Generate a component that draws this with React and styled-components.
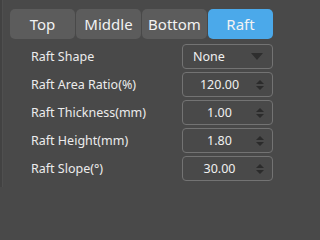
import React, { useState } from 'react'
import styled, { createGlobalStyle } from 'styled-components'

const GlobalStyle = createGlobalStyle`
  html, body {
    margin: 0;
    padding: 0;
    background: #494949;
    font-family: "Noto Sans", "Open Sans", sans-serif;
  }
`

const tabs = ['Top', 'Middle', 'Bottom', 'Raft']

const rows = [
  { label: 'Raft Shape', value: 'None', kind: 'select' },
  { label: 'Raft Area Ratio(%)', value: '120.00' },
  { label: 'Raft Thickness(mm)', value: '1.00' },
  { label: 'Raft Height(mm)', value: '1.80' },
  { label: 'Raft Slope(°)', value: '30.00' },
]

function App() {
  const [active, setActive] = useState('Raft')

  return (
    <>
      <GlobalStyle />
      <Page>
        <Strip />
        <Panel>
          <TabBar>
            {tabs.map((t) => (
              <Tab key={t} $active={t === active} onClick={() => setActive(t)}>
                {t}
              </Tab>
            ))}
          </TabBar>

          <Form>
            {rows.map((r) => (
              <Row key={r.label}>
                <Label>{r.label}</Label>
                <Field>
                  <Value $select={r.kind === 'select'}>{r.value}</Value>
                  {r.kind === 'select' ? (
                    <DropArrow />
                  ) : (
                    <Spinner>
                      <ArrowUp />
                      <ArrowDown />
                    </Spinner>
                  )}
                </Field>
              </Row>
            ))}
          </Form>
        </Panel>
      </Page>
    </>
  )
}

const Page = styled.div`
  width: 282px;
  height: 220px;
  display: flex;
  background: #494949;
  overflow: hidden;
`

const Strip = styled.div`
  width: 2px;
  height: 187px;
  background: #424242;
  border-right: 1px solid #4f4f4f;
`

const Panel = styled.div`
  flex: 1;
  padding: 9px 0 0 7px;
`

const TabBar = styled.div`
  display: flex;
  gap: 1px;
`

const Tab = styled.div`
  width: 65px;
  height: 30px;
  border-radius: 5px;
  background: ${(p) => (p.$active ? '#4ba9ea' : '#5c5c5c')};
  color: #f2f2f2;
  font-size: 15px;
  display: flex;
  align-items: center;
  justify-content: center;
  cursor: pointer;
`

const Form = styled.div`
  display: flex;
  flex-direction: column;
  gap: 3px;
  padding: 5px 0 0 21px;
`

const Row = styled.div`
  display: flex;
  align-items: center;
  justify-content: space-between;
  width: 242px;
  height: 25px;
`

const Label = styled.div`
  color: #ececec;
  font-size: 12.5px;
  white-space: nowrap;
`

const Field = styled.div`
  position: relative;
  width: 89px;
  height: 23px;
  border: 1px solid #737373;
  border-radius: 4px;
  display: flex;
  align-items: center;
`

const Value = styled.div`
  flex: 1;
  color: #f0f0f0;
  font-size: 12.5px;
  text-align: ${(p) => (p.$select ? 'left' : 'center')};
  padding-left: ${(p) => (p.$select ? '10px' : '0')};
`

const DropArrow = styled.div`
  width: 0;
  height: 0;
  margin-right: 9px;
  border-left: 6px solid transparent;
  border-right: 6px solid transparent;
  border-top: 7px solid #2e2e2e;
`

const Spinner = styled.div`
  display: flex;
  flex-direction: column;
  gap: 2px;
  margin-right: 8px;
`

const ArrowUp = styled.div`
  width: 0;
  height: 0;
  border-left: 4px solid transparent;
  border-right: 4px solid transparent;
  border-bottom: 4px solid #2b2b2b;
`

const ArrowDown = styled.div`
  width: 0;
  height: 0;
  border-left: 4px solid transparent;
  border-right: 4px solid transparent;
  border-top: 4px solid #2b2b2b;
`

export default App
